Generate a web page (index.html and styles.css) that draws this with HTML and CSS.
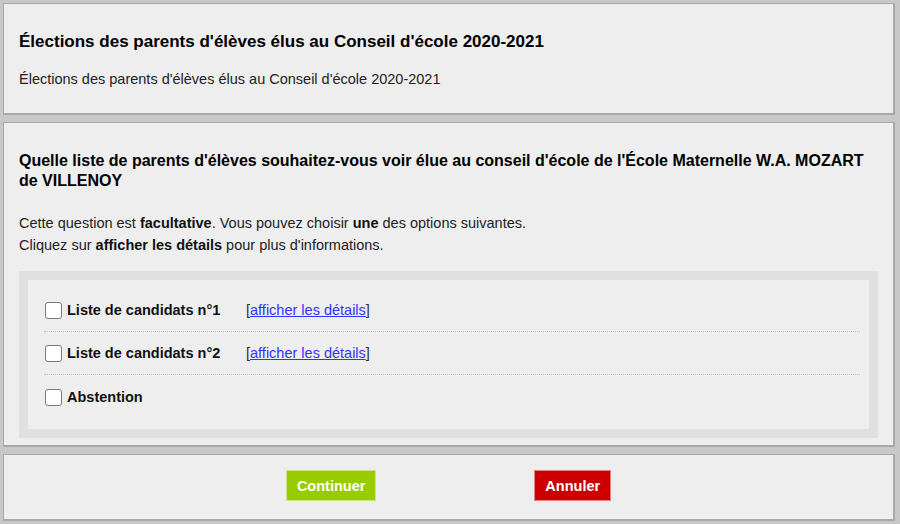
FILE: index.html
```html
<!DOCTYPE html>
<html lang="fr">
<head>
  <meta charset="UTF-8">
  <title>Élections des parents d'élèves</title>
  <link rel="stylesheet" href="styles.css">
</head>
<body>
  <div class="panel intro">
    <h2>Élections des parents d'élèves élus au Conseil d'école 2020-2021</h2>
    <p>Élections des parents d'élèves élus au Conseil d'école 2020-2021</p>
  </div>

  <div class="panel question">
    <h3>Quelle liste de parents d'élèves souhaitez-vous voir élue au conseil d'école de l'École Maternelle W.A. MOZART de VILLENOY</h3>
    <p class="hint">Cette question est <b>facultative</b>. Vous pouvez choisir <b>une</b> des options suivantes.<br>
      Cliquez sur <b>afficher les détails</b> pour plus d'informations.</p>

    <div class="options">
      <div class="options-inner">
        <div class="option">
          <input type="checkbox" id="opt1">
          <label for="opt1">Liste de candidats n°1</label>
          <span class="details">[<a href="#">afficher les détails</a>]</span>
        </div>
        <div class="option">
          <input type="checkbox" id="opt2">
          <label for="opt2">Liste de candidats n°2</label>
          <span class="details">[<a href="#">afficher les détails</a>]</span>
        </div>
        <div class="option">
          <input type="checkbox" id="opt3">
          <label for="opt3">Abstention</label>
        </div>
      </div>
    </div>
  </div>

  <div class="panel actions">
    <button class="btn btn-ok">Continuer</button>
    <button class="btn btn-cancel">Annuler</button>
  </div>
</body>
</html>
```

FILE: styles.css
```css
body { margin: 0; padding: 3px 5px 0 3px; background: #c8c8c8; font-family: "Liberation Sans", Arial, sans-serif; color: #222; }
.panel { background: #eeeeee; border: 1px solid #a8a8a8; border-right-width: 2px; border-bottom-width: 2px; margin-bottom: 7px; }
.intro { padding: 28px 15px 24px; height: 57px; }
.intro h2 { margin: 0; font-size: 17px; line-height: 20px; color: #000; }
.intro p { margin: 17px 0 0; font-size: 14.5px; line-height: 20px; }
.question { padding: 28px 15px 7px 15px; }
.question h3 { margin: 0; font-size: 16px; line-height: 20px; color: #000; }
.hint { margin: 21px 0 15px; font-size: 14.5px; line-height: 22px; }
.hint b { color: #111; }
.options { border: 9px solid #e0e0e0; }
.options-inner { padding: 9px 9px 10px 16px; }
.option { display: flex; align-items: center; height: 42px; border-bottom: 1px dotted #c4c4c4; font-size: 14.5px; }
.option:last-child { border-bottom: none; height: 44px; }
.option input { appearance: none; -webkit-appearance: none; width: 17px; height: 17px; margin: 0 5px 0 1px; background: #fff; border: 1px solid #7a7a7a; border-radius: 3px; }
.option label { width: 179px; font-weight: bold; color: #111; }
.details { color: #333; }
.details a { color: #3333ff; }
.actions { display: flex; justify-content: center; gap: 158px; padding: 15px 0 18px; }
.btn { font-family: inherit; font-size: 14.5px; font-weight: bold; color: #fff; border: 1px solid rgba(255,255,255,0.5); padding: 6px 10px; height: 31px; cursor: pointer; }
.btn-ok { background: #99cc00; }
.btn-cancel { background: #cc0000; }
```
